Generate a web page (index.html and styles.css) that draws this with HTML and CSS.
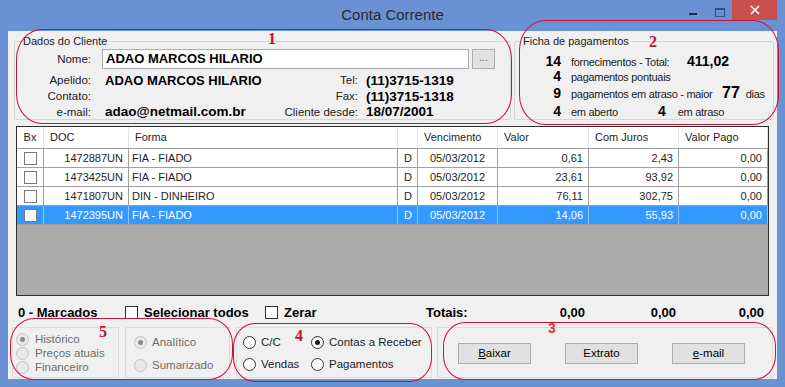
FILE: index.html
```html
<!DOCTYPE html>
<html lang="pt-BR">
<head>
    <meta charset="UTF-8">
    <title>Conta Corrente</title>
    <link rel="stylesheet" href="styles.css">
</head>
<body>
    <div class="window">
        <div class="titlebar">
            <span></span>
            <span class="title">Conta Corrente</span>
            <div class="caption">
                <span class="cap-btn"><i class="cap-min"></i></span>
                <span class="cap-btn"><i class="cap-max"></i></span>
                <span class="cap-close">
                    <svg width="10" height="10" viewBox="0 0 10 10"><path d="M1 1 L9 9 M9 1 L1 9" stroke="#fff" stroke-width="1.6"/></svg>
                </span>
            </div>
        </div>

        <div class="client">
            <div class="top-row">
                <div class="group dados">
                    <div class="group-title">Dados do Cliente</div>
                    <div class="nome-row">
                        <span class="lbl nome-lbl">Nome:</span>
                        <div class="textbox">ADAO MARCOS HILARIO</div>
                        <span class="dots">...</span>
                    </div>
                    <div class="info">
                        <span class="lbl">Apelido:</span>
                        <b class="val name">ADAO MARCOS HILARIO</b>
                        <span class="lbl r">Tel:</span>
                        <b class="val">(11)3715-1319</b>

                        <span class="lbl">Contato:</span>
                        <b class="val"></b>
                        <span class="lbl r">Fax:</span>
                        <b class="val">(11)3715-1318</b>

                        <span class="lbl">e-mail:</span>
                        <b class="val">adao@netmail.com.br</b>
                        <span class="lbl r">Cliente desde:</span>
                        <b class="val">18/07/2001</b>
                    </div>
                </div>

                <div class="group ficha">
                    <div class="group-title">Ficha de pagamentos</div>
                    <div class="f-row r1">
                        <b class="num">14</b>
                        <span class="f-txt" style="width:116px">fornecimentos - Total:</span>
                        <b class="num-big">411,02</b>
                    </div>
                    <div class="f-row r2">
                        <b class="num">4</b>
                        <span class="f-txt">pagamentos pontuais</span>
                    </div>
                    <div class="f-row r3">
                        <b class="num">9</b>
                        <span class="f-txt" style="width:151px">pagamentos em atraso - maior</span>
                        <b class="num-huge">77</b>
                        <span class="f-dias">dias</span>
                    </div>
                    <div class="f-row r4">
                        <b class="num">4</b>
                        <span class="f-txt" style="width:87px">em aberto</span>
                        <b class="num-big">4</b>
                        <span class="f-dias">em atraso</span>
                    </div>
                </div>
            </div>

            <div class="grid">
                <div class="g-head">
                    <span class="c-bx">Bx</span>
                    <span>DOC</span>
                    <span>Forma</span>
                    <span></span>
                    <span>Vencimento</span>
                    <span>Valor</span>
                    <span>Com Juros</span>
                    <span>Valor Pago</span>
                </div>
                <div class="g-row">
                    <span class="c-bx"><i class="chk"></i></span>
                    <span class="num-cell">1472887UN</span>
                    <span>FIA - FIADO</span>
                    <span class="c-d">D</span>
                    <span class="c-date">05/03/2012</span>
                    <span class="num-cell">0,61</span>
                    <span class="num-cell">2,43</span>
                    <span class="num-cell">0,00</span>
                </div>
                <div class="g-row">
                    <span class="c-bx"><i class="chk"></i></span>
                    <span class="num-cell">1473425UN</span>
                    <span>FIA - FIADO</span>
                    <span class="c-d">D</span>
                    <span class="c-date">05/03/2012</span>
                    <span class="num-cell">23,61</span>
                    <span class="num-cell">93,92</span>
                    <span class="num-cell">0,00</span>
                </div>
                <div class="g-row">
                    <span class="c-bx"><i class="chk"></i></span>
                    <span class="num-cell">1471807UN</span>
                    <span>DIN - DINHEIRO</span>
                    <span class="c-d">D</span>
                    <span class="c-date">05/03/2012</span>
                    <span class="num-cell">76,11</span>
                    <span class="num-cell">302,75</span>
                    <span class="num-cell">0,00</span>
                </div>
                <div class="g-row selected">
                    <span class="c-bx"><i class="chk"></i></span>
                    <span class="num-cell">1472395UN</span>
                    <span>FIA - FIADO</span>
                    <span class="c-d">D</span>
                    <span class="c-date">05/03/2012</span>
                    <span class="num-cell">14,06</span>
                    <span class="num-cell">55,93</span>
                    <span class="num-cell">0,00</span>
                </div>
            </div>

            <div class="totals">
                <b class="t1">0 - Marcados</b>
                <span class="t2"><i class="chk dark"></i><b>Selecionar todos</b></span>
                <span class="t3"><i class="chk dark"></i><b>Zerar</b></span>
                <b class="t-lbl">Totais:</b>
                <b class="t-val v1">0,00</b>
                <b class="t-val v2">0,00</b>
                <b class="t-val v3">0,00</b>
            </div>

            <div class="bottom-row">
                <div class="frame f5a">
                    <label class="radio off"><i class="rb on"></i>Histórico</label>
                    <label class="radio off"><i class="rb"></i>Preços atuais</label>
                    <label class="radio off"><i class="rb"></i>Financeiro</label>
                </div>
                <div class="frame f5b">
                    <label class="radio off"><i class="rb on"></i>Analítico</label>
                    <label class="radio off"><i class="rb"></i>Sumarizado</label>
                </div>
                <div class="frame f4">
                    <div class="radio-col c1">
                        <label class="radio"><i class="rb"></i>C/C</label>
                        <label class="radio"><i class="rb"></i>Vendas</label>
                    </div>
                    <div class="radio-col">
                        <label class="radio"><i class="rb on"></i>Contas a Receber</label>
                        <label class="radio"><i class="rb"></i>Pagamentos</label>
                    </div>
                </div>
                <div class="frame f3">
                    <span class="btn"><u>B</u>aixar</span>
                    <span class="btn">Extrato</span>
                    <span class="btn"><u>e</u>-mail</span>
                </div>
            </div>
        </div>

        <!-- marcações em vermelho -->
        <div class="mark m1"></div>
        <div class="mark m2"></div>
        <div class="mark m3"></div>
        <div class="mark m4"></div>
        <div class="mark m5"></div>
        <span class="mark-num n1">1</span>
        <span class="mark-num n2">2</span>
        <span class="mark-num n3">3</span>
        <span class="mark-num n4">4</span>
        <span class="mark-num n5">5</span>
    </div>
</body>
</html>
```

FILE: styles.css
```css
body {
    margin: 0;
    font-family: "Liberation Sans", Arial, sans-serif;
    font-size: 11px;
    color: #1e1e1e;
    white-space: nowrap;
}
.window {
    position: relative;
    width: 785px;
    height: 387px;
    background: #6a91d4;
    overflow: hidden;
}
.titlebar {
    height: 31px;
    display: grid;
    grid-template-columns: 1fr auto 1fr;
    align-items: start;
}
.title {
    font-size: 15px;
    line-height: 30px;
    color: #2b2b2b;
}
.caption {
    justify-self: end;
    display: flex;
    margin-right: 8px;
}
.cap-btn {
    width: 26px;
    height: 20px;
    position: relative;
}
.cap-min {
    position: absolute;
    left: 9px;
    top: 13px;
    width: 8px;
    height: 2px;
    background: #1f2d48;
}
.cap-max {
    position: absolute;
    left: 9px;
    top: 8px;
    width: 8px;
    height: 6px;
    border: 1px solid #34507e;
    border-top-width: 2px;
}
.cap-close {
    width: 45px;
    height: 20px;
    background: #c7504f;
    display: flex;
    align-items: center;
    justify-content: center;
}

.client {
    margin: 0 8px;
    height: 348px;
    background: #f0f0f0;
    padding: 10px 0 0 6px;
    box-sizing: border-box;
}
.top-row {
    display: flex;
    gap: 3px;
}
.group {
    border: 1px solid #d5d5d5;
    border-radius: 2px;
    height: 79px;
    box-sizing: border-box;
}
.group-title {
    width: fit-content;
    margin: -7px 0 0 6px;
    padding: 0 2px;
    line-height: 13px;
    background: #f0f0f0;
    color: #222;
}
.dados {
    width: 497px;
}
.ficha {
    width: 260px;
}
.lbl {
    color: #222;
    font-size: 11.5px;
    text-align: right;
}
.nome-row {
    display: flex;
    align-items: center;
    margin-top: 1px;
    height: 20px;
}
.nome-lbl {
    width: 76px;
    margin-right: 11px;
}
.textbox {
    width: 367px;
    height: 20px;
    box-sizing: border-box;
    border: 1px solid #abadb3;
    background: #fff;
    font-weight: bold;
    font-size: 13px;
    line-height: 18px;
    padding-left: 3px;
    color: #000;
}
.dots {
    margin-left: 3px;
    width: 23px;
    height: 20px;
    box-sizing: border-box;
    border: 1px solid #adadad;
    background: #e1e1e1;
    text-align: center;
    font-size: 10px;
    line-height: 16px;
    color: #555;
}
.info {
    display: grid;
    grid-template-columns: 90px 177px 84px auto;
    grid-template-rows: 16px 16px 15px;
    align-items: center;
    margin-top: 3px;
}
.info .lbl {
    padding-right: 14px;
}
.info .lbl.r {
    padding-right: 8px;
}
.val {
    font-size: 13.5px;
    color: #000;
}
.val.name {
    font-size: 13px;
}

.f-row {
    display: flex;
    align-items: baseline;
    height: 16px;
}
.f-row.r1 {
    margin-top: 5px;
    height: 15px;
}
.f-row.r4 {
    margin-top: 3px;
}
.f-row > * {
    flex-shrink: 0;
}
.num {
    width: 46px;
    text-align: right;
    font-size: 14px;
    color: #000;
}
.f-txt {
    margin-left: 10px;
    font-size: 11px;
    letter-spacing: -0.3px;
    color: #222;
}
.num-big {
    font-size: 14px;
    color: #000;
}
.num-huge {
    font-size: 16px;
    color: #000;
}
.f-dias {
    margin-left: 6px;
    font-size: 11px;
    letter-spacing: -0.3px;
    color: #222;
}
.r4 .f-dias {
    margin-left: 12px;
}

.grid {
    margin: 6px 0 0 2px;
    width: 753px;
    height: 170px;
    box-sizing: border-box;
    border: 1px solid #2d2d2d;
    background: #ababab;
}
.g-head,
.g-row {
    display: grid;
    grid-template-columns: 27px 85px 269px 20px 80px 91px 90px 89px;
}
.g-head {
    height: 22px;
    background: #fff;
    border-bottom: 1px solid #a0a0a0;
    box-sizing: border-box;
}
.g-head span {
    border-right: 1px solid #e3e3e3;
    padding-left: 6px;
    line-height: 21px;
}
.g-head .c-bx {
    padding-left: 0;
    text-align: center;
}
.g-row {
    height: 19px;
    background: #fff;
    border-bottom: 1px solid #a0a0a0;
    box-sizing: border-box;
}
.g-row span {
    border-right: 1px solid #a0a0a0;
    padding-left: 3px;
    line-height: 18px;
    overflow: hidden;
}
.g-row .num-cell {
    text-align: right;
    padding: 0 5px 0 0;
}
.g-row .c-date {
    text-align: center;
    padding: 0;
}
.g-row .c-d {
    padding-left: 6px;
}
.c-bx {
    display: flex;
    align-items: center;
    justify-content: center;
}
.g-row .c-bx {
    padding: 0;
}
.g-row.selected {
    background: #3399ff;
    color: #fff;
}
.g-row.selected span {
    border-right-color: #8fc5ff;
}
.chk {
    display: inline-block;
    width: 13px;
    height: 13px;
    box-sizing: border-box;
    border: 1px solid #7a7a7a;
    background: #fff;
}
.chk.dark {
    border-color: #333;
}

.totals {
    display: flex;
    align-items: center;
    height: 25px;
    margin-top: 4px;
    padding-left: 4px;
    font-size: 13px;
    color: #000;
}
.t1 {
    width: 107px;
}
.t2,
.t3 {
    display: flex;
    align-items: center;
    gap: 6px;
}
.t2 {
    width: 140px;
}
.t3 {
    width: 161px;
}
.t-lbl {
    width: 71px;
}
.t-val {
    text-align: right;
}
.v1 {
    width: 88px;
    padding-right: 3px;
}
.v2 {
    width: 88px;
    padding-right: 2px;
}
.v3 {
    width: 86px;
    padding-right: 4px;
}

.bottom-row {
    display: flex;
    margin: 2px 0 0 -2px;
}
.frame {
    height: 51px;
    box-sizing: border-box;
    border: 1px solid #dcdcdc;
    margin-right: 6px;
}
.f5a {
    width: 107px;
    padding: 4px 0 0 3px;
}
.f5b {
    width: 105px;
    padding: 7px 0 0 8px;
    display: flex;
    flex-direction: column;
    gap: 9px;
}
.f4 {
    width: 196px;
    padding: 7px 0 0 6px;
    display: flex;
    margin-right: 5px;
}
.radio-col {
    display: flex;
    flex-direction: column;
    gap: 8px;
}
.radio-col.c1 {
    width: 68px;
}
.f3 {
    width: 336px;
    padding: 15px 0 0 20px;
    display: flex;
    gap: 34px;
    margin-right: 0;
}
.radio {
    display: flex;
    align-items: center;
    height: 14px;
    font-size: 11.5px;
    color: #1e1e1e;
}
.radio.off {
    color: #6d6d6d;
}
.rb {
    width: 13px;
    height: 13px;
    box-sizing: border-box;
    border-radius: 50%;
    border: 1px solid #333;
    background: #fff;
    margin-right: 5px;
    display: flex;
    align-items: center;
    justify-content: center;
}
.rb.on::after {
    content: "";
    width: 5px;
    height: 5px;
    border-radius: 50%;
    background: #1a1a1a;
}
.off .rb {
    border-color: #c2c2c2;
    background: #e8e8e8;
}
.off .rb.on::after {
    background: #8a8a8a;
}
.f5a .rb {
    margin-right: 6px;
}
.btn {
    width: 73px;
    height: 21px;
    box-sizing: border-box;
    border: 1px solid #adadad;
    background: #e1e1e1;
    text-align: center;
    line-height: 19px;
    font-size: 11.5px;
    color: #000;
}

.mark {
    position: absolute;
    border: 1px solid #c8143a;
    border-radius: 26px / 30px;
}
.m1 { left: 16px; top: 29px; width: 494px; height: 93px; }
.m2 { left: 519px; top: 20px; width: 258px; height: 103px; }
.m3 { left: 443px; top: 322px; width: 331px; height: 56px; border-radius: 22px / 24px; }
.m4 { left: 233px; top: 323px; width: 197px; height: 57px; border-radius: 22px / 24px; }
.m5 { left: 10px; top: 318px; width: 221px; height: 60px; border-radius: 24px / 26px; }
.mark-num {
    position: absolute;
    font-family: "Liberation Serif", "Times New Roman", serif;
    font-weight: bold;
    font-size: 16px;
    line-height: 16px;
    color: #c8102e;
}
.n1 { left: 268px; top: 31px; }
.n2 { left: 649px; top: 34px; }
.n3 { left: 548px; top: 320px; font-family: "Liberation Sans", Arial, sans-serif; color: #e0363a; font-size: 14px; }
.n4 { left: 295px; top: 328px; }
.n5 { left: 99px; top: 324px; }
```
